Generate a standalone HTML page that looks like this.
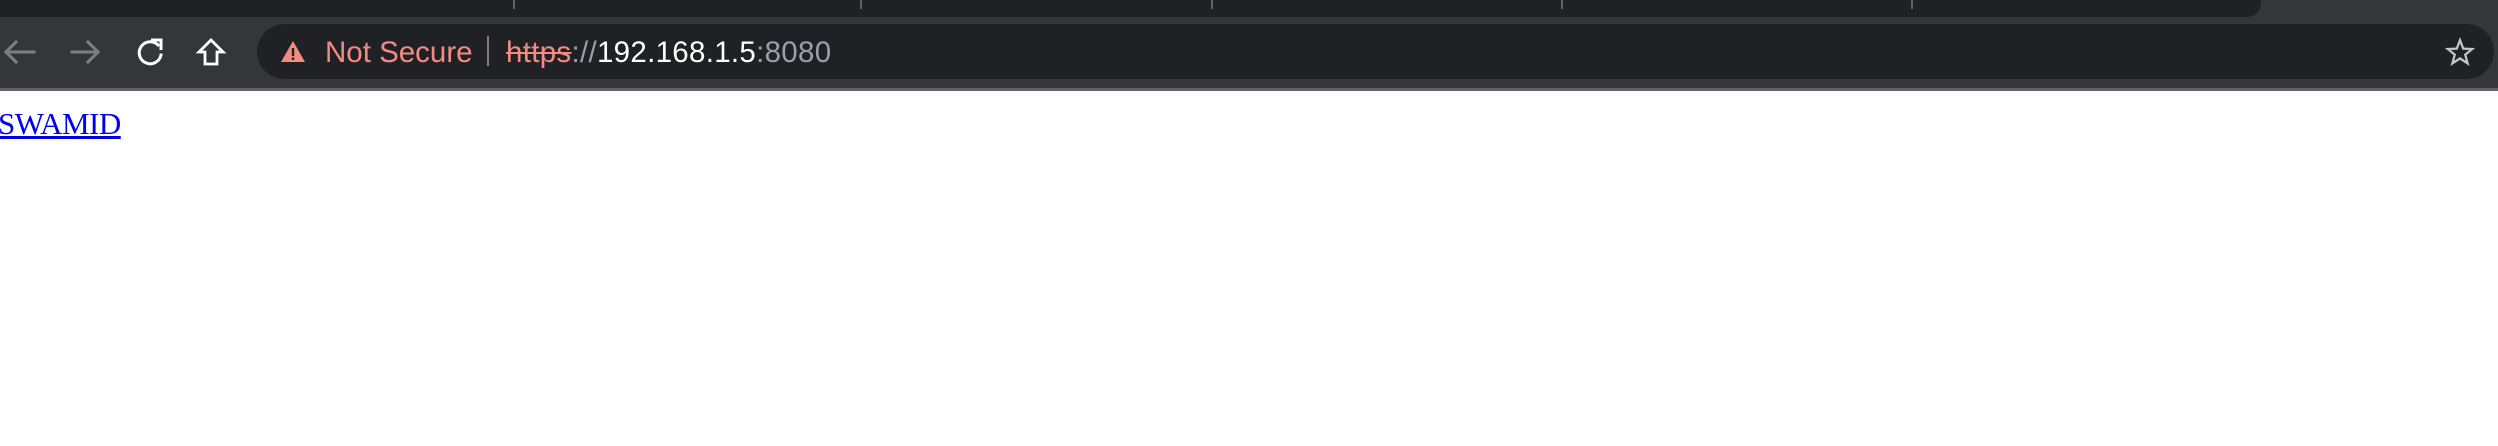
<!DOCTYPE html>
<html><head><style>
html,body{margin:0;padding:0;width:2498px;height:446px;overflow:hidden;background:#fff;}
.tabs{position:absolute;left:0;top:0;width:2498px;height:17px;background:#35363a;}
.tabstrip{position:absolute;left:0;top:0;width:2261px;height:17px;background:#202124;border-bottom-right-radius:14px;}
.sep{position:absolute;top:0;width:2px;height:9px;background:#5f6368;}
.bar{position:absolute;left:0;top:17px;width:2498px;height:72px;background:#35363a;}
.line{position:absolute;left:0;top:88px;width:2498px;height:3px;background:#5f6368;}
.omni{position:absolute;left:257px;top:24px;width:2237px;height:55px;background:#202124;border-radius:28px;}
.t{position:absolute;font-family:"Liberation Sans",sans-serif;font-size:29.5px;top:36px;white-space:nowrap;}
a{position:absolute;left:-2px;top:106px;font-family:"Liberation Serif",serif;font-size:31px;color:#0000ee;text-decoration:underline;letter-spacing:-0.5px;}
</style></head><body>
<div class="tabs"><div class="tabstrip">
<div class="sep" style="left:513px"></div><div class="sep" style="left:860px"></div><div class="sep" style="left:1211px"></div><div class="sep" style="left:1561px"></div><div class="sep" style="left:1911px"></div>
</div></div>
<div class="bar"></div>
<div class="line"></div>
<svg style="position:absolute;left:0;top:34px" width="360" height="36" viewBox="0 0 360 36">
<g fill="none" stroke-width="3" stroke-linecap="square">
<path d="M34 18H6M16 8L6 18L16 28" stroke="#7d7e82"/>
<path d="M72 18H98M88 8L98 18L88 28" stroke="#7d7e82"/>
<path d="M158 11A11 11 0 1 0 161 21" stroke="#fff"/>
<path d="M151 6H161V16" stroke="#fff" stroke-linecap="butt"/>
<path d="M211 6L199 18H205V30H217V18H223Z" stroke="#fff" stroke-linejoin="miter" stroke-width="2.8"/>
</g>
</svg>
<div class="omni"></div>
<svg style="position:absolute;left:279px;top:39px" width="28" height="26" viewBox="0 0 28 26">
<path d="M14 2L26 23H2Z" fill="#f28b82"/><rect x="12.8" y="9" width="2.4" height="8" fill="#202124"/><rect x="12.8" y="18.5" width="2.4" height="2.4" fill="#202124"/>
</svg>
<div class="t" style="left:325px;color:#f28b82">Not Secure</div>
<div style="position:absolute;left:487px;top:36px;width:2px;height:30px;background:#7d7e82"></div>
<div class="t" style="left:506px;letter-spacing:0.3px"><span style="color:#f28b82;text-decoration:line-through">https</span><span style="color:#9aa0a6">://</span><span style="color:#fff">192.168.1.5</span><span style="color:#9aa0a6">:8080</span></div>
<svg style="position:absolute;left:2445px;top:37px" width="30" height="30" viewBox="0 0 24 24">
<path d="M12 2.5L14.6 9.3L21.8 9.6L16.2 14.1L18.1 21.1L12 17.1L5.9 21.1L7.8 14.1L2.2 9.6L9.4 9.3Z" fill="none" stroke="#c4c6c9" stroke-width="1.8" stroke-linejoin="miter"/>
</svg>
<a>SWAMID</a>
</body></html>
